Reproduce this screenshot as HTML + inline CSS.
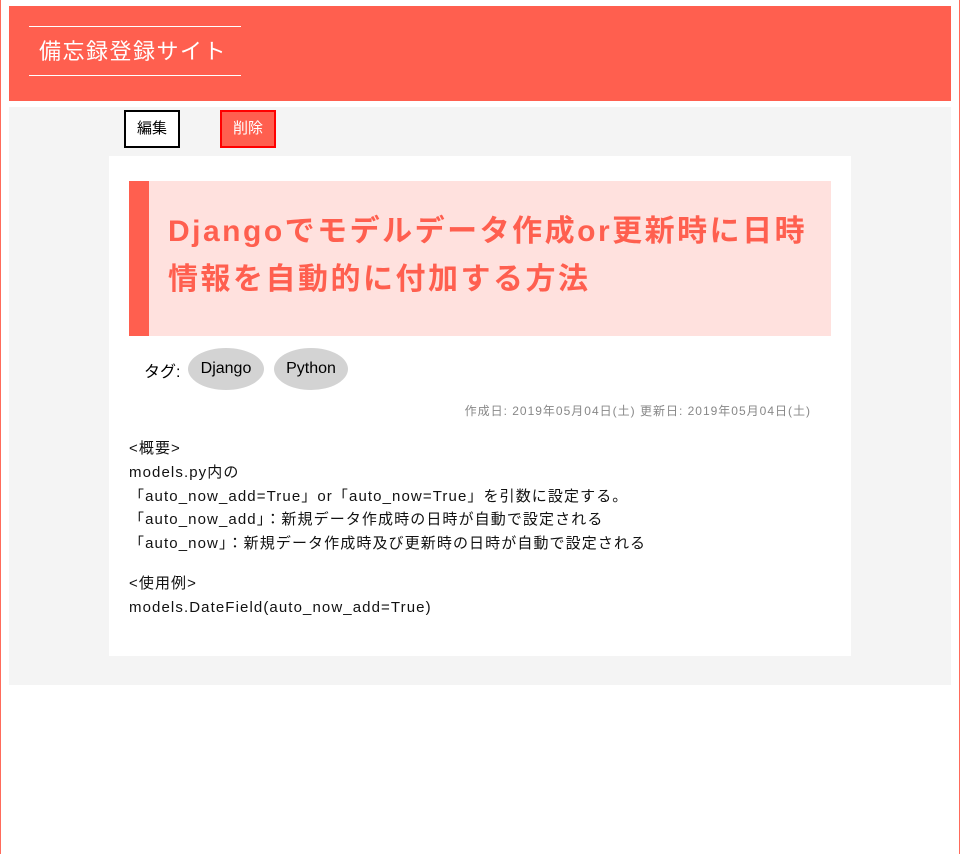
<!DOCTYPE html>
<html><head><meta charset="utf-8"><style>
body{margin:0;width:960px;height:854px;background:#fff;position:relative;font-family:"Liberation Sans","Noto Sans CJK JP",sans-serif;overflow:hidden}
.lb{position:absolute;top:0;left:0;width:1px;height:854px;background:#ff6b5b}
.rb{position:absolute;top:0;right:0;width:1px;height:854px;background:#ff6b5b}
.hd{position:absolute;left:9px;top:6px;width:942px;height:95px;background:#ff5f4f}
.logo{position:absolute;left:20px;top:20px;width:212px;height:50px;border-top:1px solid #fff;border-bottom:1px solid #fff;color:#fff;font-size:22px;line-height:50px;padding-left:10px;box-sizing:border-box;letter-spacing:1.5px}
.gr{position:absolute;left:9px;top:107px;width:942px;height:578px;background:#f4f4f4}
.b1{position:absolute;left:124px;top:110px;width:52px;height:34px;border:2px solid #000;background:#fff;font-size:15px;text-align:center;line-height:34px}
.b2{position:absolute;left:220px;top:110px;width:52px;height:34px;border:2px solid #f00;background:#ff5f4f;color:#fff;font-size:15px;text-align:center;line-height:34px}
.card{position:absolute;left:109px;top:156px;width:742px;height:500px;background:#fff}
.tt{position:absolute;left:129px;top:181px;width:702px;height:155px;background:#ffe1de;border-left:20px solid #ff5f4f;box-sizing:border-box;color:#ff5f4f;font-size:30px;font-weight:bold;line-height:48px;padding:27px 0 0 19px;letter-spacing:2.5px;white-space:nowrap}
.tag{position:absolute;top:348px;height:42px;border-radius:50%;background:#d3d3d3;font-size:16px;line-height:42px;text-align:center}
.tx{position:absolute;left:129px;top:437px;font-size:15px;line-height:23.8px;color:#111;letter-spacing:1.1px;white-space:nowrap}
</style></head><body>
<div class="lb"></div><div class="rb"></div>
<div class="hd"><div class="logo">備忘録登録サイト</div></div>
<div class="gr"></div>
<div class="b1">編集</div><div class="b2">削除</div>
<div class="card"></div>
<div class="tt">Djangoでモデルデータ作成or更新時に日時<br>情報を自動的に付加する方法</div>
<div style="position:absolute;left:144px;top:358px;font-size:16px">タグ:</div>
<div class="tag" style="left:188px;width:76px">Django</div>
<div class="tag" style="left:274px;width:74px">Python</div>
<div style="position:absolute;right:149px;top:402px;font-size:12px;color:#888;letter-spacing:1px">作成日: 2019年05月04日(土) 更新日: 2019年05月04日(土)</div>
<div class="tx">&lt;概要&gt;<br>models.py内の<br>「auto_now_add=True」or「auto_now=True」を引数に設定する。<br>「auto_now_add」：新規データ作成時の日時が自動で設定される<br>「auto_now」：新規データ作成時及び更新時の日時が自動で設定される<div style="height:16px"></div>&lt;使用例&gt;<br>models.DateField(auto_now_add=True)</div>
</body></html>
